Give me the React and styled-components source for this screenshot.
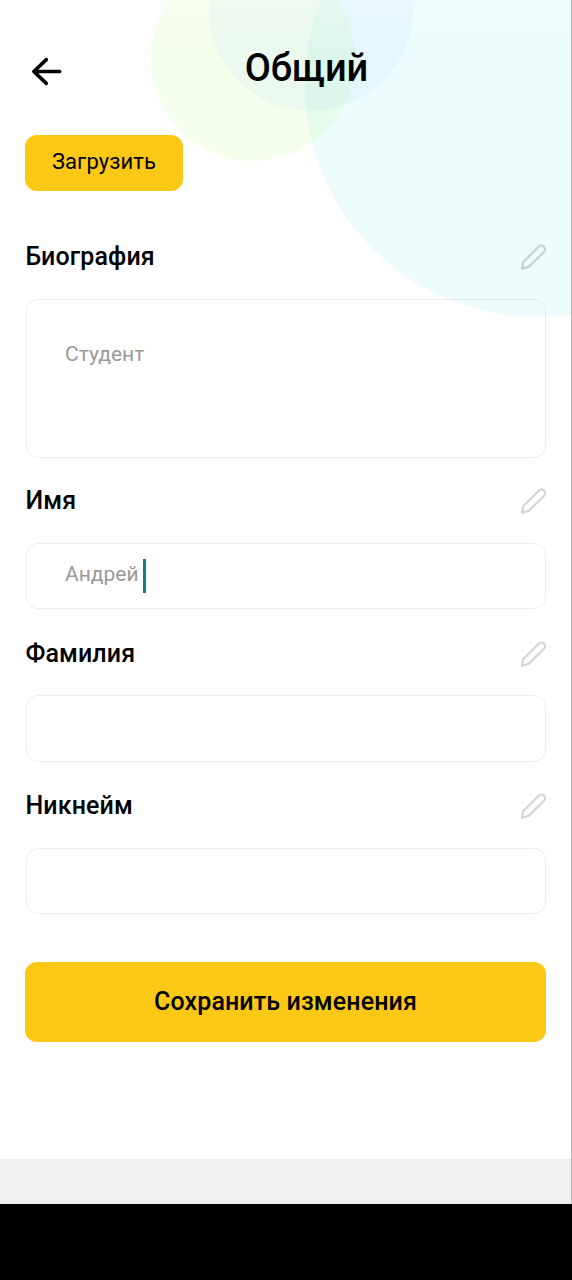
import { useState } from 'react';
import styled, { createGlobalStyle } from 'styled-components';

const FIELDS = [
    { id: 'bio', label: 'Биография', value: 'Студент', multiline: true },
    { id: 'name', label: 'Имя', value: 'Андрей' },
    { id: 'surname', label: 'Фамилия', value: '' },
    { id: 'nickname', label: 'Никнейм', value: '' },
];

const BackIcon = () => (
    <svg width="32" height="30" viewBox="0 0 32 30" fill="none">
        <path
            d="M15.3 2.6L2.8 14.5L15.3 26.4M3.2 14.5H28.7"
            stroke="#000"
            strokeWidth="3.6"
            strokeLinecap="round"
            strokeLinejoin="round"
        />
    </svg>
);

const PencilIcon = () => (
    <svg width="28" height="28" viewBox="0 0 28 28" fill="none">
        <path
            d="M3 25.8L4 19.6L19.4 3.9C20.9 2.4 23.3 2.2 24.9 3.7C26.5 5.3 26.4 7.5 24.9 9L9.6 23.9Z"
            stroke="#000"
            strokeOpacity="0.17"
            strokeWidth="2.2"
            strokeLinejoin="round"
        />
    </svg>
);

const Field = ({ label, value, multiline, focused, onEdit }) => (
    <FieldWrapper>
        <FieldHeader>
            <Label>{label}</Label>
            <EditButton aria-label={label} onClick={onEdit}>
                <PencilIcon />
            </EditButton>
        </FieldHeader>
        <Box $multiline={multiline}>
            <Value>{value}</Value>
            {focused && <Caret />}
        </Box>
    </FieldWrapper>
);

const App = () => {
    const [active, setActive] = useState('name');

    return (
        <>
            <GlobalStyle />
            <Page>
                <Screen>
                    {/* Background circles */}
                    <Backdrop viewBox="0 0 571 330">
                        <defs>
                            <linearGradient id="fade" x1="0" y1="0" x2="0" y2="1">
                                <stop offset="0" stopColor="#fff" stopOpacity="0.2" />
                                <stop offset="1" stopColor="#fff" stopOpacity="0" />
                            </linearGradient>
                        </defs>
                        <circle cx="537" cy="85" r="232" fill="rgba(10, 210, 228, 0.07)" />
                        <circle cx="253" cy="59" r="102" fill="rgba(130, 255, 20, 0.08)" />
                        <circle cx="311" cy="9" r="102" fill="rgba(115, 170, 255, 0.07)" />
                        <rect width="571" height="60" fill="url(#fade)" />
                    </Backdrop>
                    <Header>
                        <BackButton aria-label="Назад">
                            <BackIcon />
                        </BackButton>
                        <Title>Общий</Title>
                    </Header>
                    <Content>
                        <UploadButton>Загрузить</UploadButton>
                        <Form>
                            {FIELDS.map(({ id, ...field }) => (
                                <Field
                                    key={id}
                                    {...field}
                                    focused={active === id}
                                    onEdit={() => setActive(id)}
                                />
                            ))}
                        </Form>
                        <SaveButton>Сохранить изменения</SaveButton>
                    </Content>
                    <BottomBar />
                </Screen>
                <SystemBar />
            </Page>
        </>
    );
};

export default App;

const GlobalStyle = createGlobalStyle`
    * {
        box-sizing: border-box;
    }
    body {
        margin: 0;
        background: #000;
        color: #000;
        font-family: Roboto, 'Liberation Sans', sans-serif;
    }
    button {
        padding: 0;
        border: none;
        background: none;
        color: inherit;
        font-family: inherit;
        cursor: pointer;
    }
`;

const Page = styled.div`
    width: 572px;
    height: 1280px;
    display: flex;
    flex-direction: column;
    overflow: hidden;
`;

const Screen = styled.div`
    position: relative;
    height: 1204px;
    display: flex;
    flex-direction: column;
    background: #fff;
    border-right: 1px solid #b4b7b8;
`;

const SystemBar = styled.div`
    flex: 1;
    background: #000;
`;

const Backdrop = styled.svg`
    position: absolute;
    top: 0;
    left: 0;
    width: 571px;
    height: 330px;
    pointer-events: none;
`;

const Header = styled.div`
    display: grid;
    grid-template-columns: 64px 1fr 60px;
    align-items: start;
    height: 134.5px;
    z-index: 1;
`;

const BackButton = styled.button`
    display: flex;
    padding: 57px 0 0 31px;
`;

const Title = styled.div`
    padding: 46px 0 0 38px;
    text-align: center;
    font-size: 38px;
    font-weight: 500;
    line-height: 44px;
`;

const Content = styled.div`
    flex: 1;
    display: flex;
    flex-direction: column;
    padding: 0 25px;
    z-index: 1;
`;

const UploadButton = styled.button`
    align-self: flex-start;
    width: 158px;
    height: 56px;
    padding-bottom: 2px;
    border-radius: 12px;
    background: #fbc815;
    font-size: 22px;
    letter-spacing: 0.1px;
`;

const Form = styled.div`
    display: flex;
    flex-direction: column;
    gap: 29.5px;
    margin-top: 51.5px;
    padding-left: 0.5px;
`;

const FieldWrapper = styled.div`
    display: flex;
    flex-direction: column;
    gap: 26.5px;

    &:first-child {
        margin-bottom: -0.6px;
    }
`;

const FieldHeader = styled.div`
    display: flex;
    align-items: center;
    justify-content: space-between;
    height: 30px;
`;

const Label = styled.div`
    font-size: 25px;
    font-weight: 500;
    line-height: 30px;
    letter-spacing: 0.1px;
`;

const EditButton = styled.button`
    display: flex;
    margin-right: -0.5px;
`;

const Box = styled.div`
    display: flex;
    align-items: ${({ $multiline }) => ($multiline ? 'flex-start' : 'center')};
    height: ${({ $multiline }) => ($multiline ? '159px' : '66.5px')};
    padding: ${({ $multiline }) => ($multiline ? '40px 38.5px' : '0 38.5px 1px')};
    border: 1.5px solid rgba(0, 0, 0, 0.07);
    border-radius: 12px;
`;

const Value = styled.div`
    height: 31px;
    color: #999;
    font-size: 21px;
    line-height: 28px;
`;

const Caret = styled.div`
    width: 3px;
    height: 34px;
    margin-left: 4.5px;
    background: #0b8577;
`;

const SaveButton = styled.button`
    height: 80px;
    margin-top: 48px;
    padding-bottom: 2px;
    border-radius: 12px;
    background: #fbc815;
    font-size: 25px;
    font-weight: 500;
    letter-spacing: 0.12px;
`;

const BottomBar = styled.div`
    height: 45px;
    background: #f0f0f0;
    z-index: 1;
`;
